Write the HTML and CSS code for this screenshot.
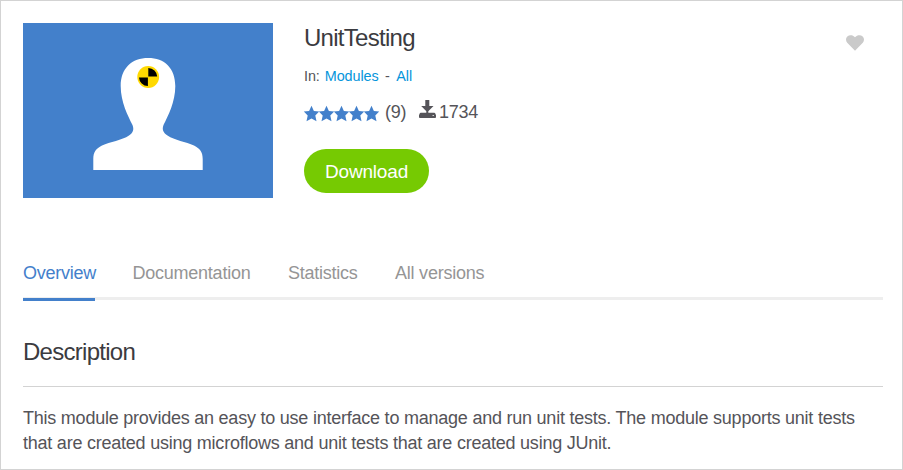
FILE: index.html
```
<!DOCTYPE html>
<html lang="en">
<head>
<meta charset="utf-8">
<title>UnitTesting</title>
<link rel="stylesheet" href="styles.css">
</head>
<body>
<main class="page">
  <header class="module">
    <svg class="cover" viewBox="0 0 250 175">
      <path fill="#fff" d="M70.300 147V136C70.300 129 73 125.500 79 122.500C87 118.500 99 117.500 106 112.500C110 109.700 111.300 107 109.500 102C105 93 97.700 79 97.700 63C97.700 45 109 35 125.200 35C141.400 35 152.300 45 152.300 63C152.300 79 145 93 140.500 102C138.700 107 140.500 109.700 144.500 112.500C151.500 117.500 163 118.500 171 122.500C177 125.500 179.700 129 179.700 136V147Z"/>
      <circle cx="125.200" cy="54" r="10.900" fill="#ffd900"/>
      <path d="M125.300 45a9 9 0 0 1 8.900 8.600h-8.900zM124.900 63a9 9 0 0 1-8.900-8.600h8.900z"/>
    </svg>
    <div class="info">
      <h1 class="title">UnitTesting</h1>
      <p class="crumbs"><span>In:</span><a>Modules</a><span>-</span><a>All</a></p>
      <div class="stats">
        <svg class="stars" viewBox="0 0 75 16">
          <defs><path id="star" d="M7.500 -.3L9.900 5L15.200 5.500L11.300 9.500L12.500 15.300L7.500 12.500L2.500 15.300L3.700 9.500L-.2 5.500L5.100 5Z"/></defs>
          <use href="#star"/><use href="#star" x="15"/><use href="#star" x="30"/><use href="#star" x="45"/><use href="#star" x="60"/>
        </svg>
        <span class="votes">(9)</span>
        <svg class="arrow" viewBox="0 0 17 18"><path d="M6.300 0h4v6h4.200L8.300 12.200L2.200 6h4.100zM1.800 12.800h13.400q.8 0 1.100.8l.7 1.600v1.900q0 .9-.9.900H.9q-.9 0-.9-.9v-1.900l.7-1.600q.3-.8 1.100-.8zM7.300 11h2v3h-2z"/><path class="light" d="M13.500 15.200h1.500v.8h-1.500z"/></svg>
        <span class="count">1734</span>
      </div>
      <button class="download">Download</button>
    </div>
    <svg class="heart" viewBox="0 0 18 16"><path d="M9 15.800L1.200 7.800C-.5 5.800-.3 3 1.300 1.400C3.300-.4 6.900-.3 9 2.200C11.100-.3 14.700-.4 16.700 1.400C18.300 3 18.500 5.800 16.800 7.800Z"/></svg>
  </header>
  <nav class="tabs"><a class="tab active">Overview</a><a class="tab">Documentation</a><a class="tab">Statistics</a><a class="tab">All versions</a></nav>
  <section>
    <h2 class="heading">Description</h2>
    <p class="text">This module provides an easy to use interface to manage and run unit tests. The module supports unit tests<br>that are created using microflows and unit tests that are created using JUnit.</p>
  </section>
</main>
</body>
</html>
```
FILE: styles.css
```
* { box-sizing: border-box; margin: 0; padding: 0; }
body { background: #fff; font-family: "Liberation Sans", Arial, sans-serif; color: #555459; }
.page { height: 470px; border: 1px solid #d3d3d3; padding: 22px 19px 0 22px; overflow: hidden; }
.module { display: flex; height: 175px; }
.cover { width: 250px; height: 175px; background: #4380cb; }
.info { margin-left: 31px; flex: 1; }
.title, .heading { font-weight: 400; font-size: 24px; line-height: 30px; color: #3b3b40; letter-spacing: -0.72px; }
.crumbs { display: flex; gap: 6.500px; margin-top: 14px; font-size: 14.400px; line-height: 18px; letter-spacing: -0.08px; }
.crumbs a { color: #0595db; }
.crumbs span:first-child { margin-right: -1.500px; }
.stats { display: flex; height: 24px; margin-top: 15px; font-size: 18px; line-height: 24px; letter-spacing: -0.2px; }
.stars { width: 75px; height: 16px; margin-top: 6px; fill: #4380cb; overflow: visible; }
.votes { margin-left: 6px; }
.arrow { width: 17px; height: 18px; margin: 0 3px 0 12.500px; fill: #555459; }
.light { fill: #fff; }
.download { display: block; width: 125px; height: 44px; margin-top: 25px; padding-top: 1px; border: 0; border-radius: 22px; background: #76ca02; color: #fff; font: 19px "Liberation Sans", Arial, sans-serif; letter-spacing: -0.18px; }
.heart { width: 18px; height: 16px; margin: 12px 19.500px 0 0; fill: #cacaca; }
.tabs { display: flex; gap: 37.500px; height: 40px; margin-top: 62px; box-shadow: inset 0 -3px #eee; }
.tab { height: 41px; padding-top: 2px; font-size: 18px; line-height: 22px; letter-spacing: -0.24px; color: #959595; }
.active { width: 72px; border-bottom: 3px solid #4380cb; color: #4380cb; }
.heading { height: 50px; margin-top: 37px; border-bottom: 1px solid #d3d3d3; }
.text { margin-top: 19px; font-size: 18px; line-height: 25px; letter-spacing: -0.23px; white-space: nowrap; }
```
